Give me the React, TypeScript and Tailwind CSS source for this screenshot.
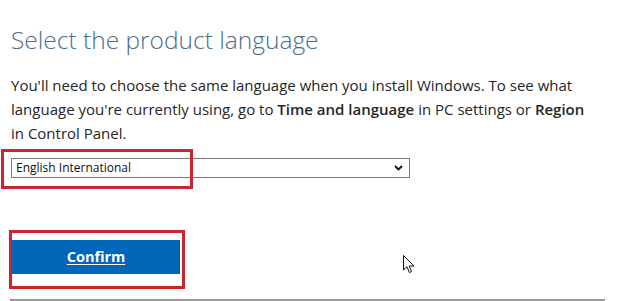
import { useState } from "react";

const FONT = { fontFamily: '"Segoe UI", "Open Sans", "Noto Sans", sans-serif' };

function Cursor() {
  return (
    <svg
      className="absolute left-[403px] top-[255px]"
      width="13"
      height="19"
      viewBox="0 0 13 19"
    >
      <path
        d="M0.5 0.5 L0.5 15 L4 11.8 L6.4 17.5 L8.6 16.6 L6.2 11 L11 11 Z"
        fill="#fff"
        stroke="#111"
        strokeWidth="1"
        strokeLinejoin="round"
      />
    </svg>
  );
}

// red annotation frame drawn over a control
function Highlight({ className }: { className: string }) {
  return (
    <div className={`pointer-events-none absolute border-[3px] border-[#c9252f] ${className}`} />
  );
}

export default function App() {
  const [lang, setLang] = useState("English International");

  return (
    <div className="h-[301px] w-[627px] overflow-hidden bg-white" style={FONT}>
      <div className="relative flex flex-col items-start pl-[11px] pt-[24px]">
        <h1 className="text-[24.5px] font-light leading-[32px] text-[#4b6d8c]">
          Select the product language
        </h1>

        <p className="mt-[17px] text-[15px] leading-[24px] text-[#262626]">
          You'll need to choose the same language when you install Windows. To see what
          <br />
          language you're currently using, go to <b className="font-semibold">Time and language</b> in PC
          settings or <b className="font-semibold">Region</b>
          <br />
          in Control Panel.
        </p>

        <div className="relative mt-[13px] w-[399px]">
          <select
            value={lang}
            onChange={(e) => setLang(e.target.value)}
            className="block h-[20px] w-full appearance-none rounded-none border border-[#7a7a7a] bg-white pl-[4px] text-[12px] leading-[18px] text-[#111] outline-none"
          >
            <option>English International</option>
            <option>English (United States)</option>
          </select>
          <svg
            className="pointer-events-none absolute right-[7px] top-[7px]"
            width="9"
            height="6"
            viewBox="0 0 9 6"
          >
            <path d="M1 1 L4.5 4.5 L8 1" fill="none" stroke="#111" strokeWidth="1.8" />
          </svg>
          <Highlight className="-left-[10px] -top-[9px] h-[40px] w-[192px]" />
        </div>

        <div className="relative ml-[1px] mt-[62px]">
          <button
            type="button"
            className="flex h-[34px] w-[168px] items-center justify-center bg-[#0067b8] text-[14.5px] font-bold text-white underline underline-offset-2"
          >
            Confirm
          </button>
          <Highlight className="-left-[3px] -top-[10px] h-[59px] w-[176px]" />
        </div>

        <div className="mt-[25px] h-[2px] w-[595px] -ml-[1px] bg-[#9a9a9a]" />

        <Cursor />
      </div>
    </div>
  );
}
